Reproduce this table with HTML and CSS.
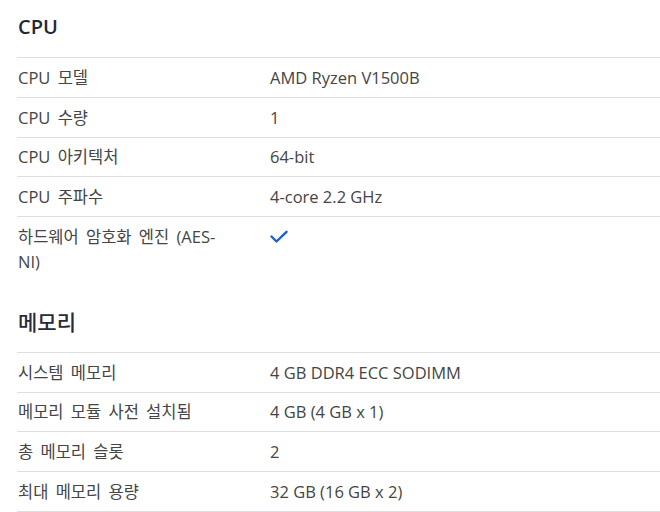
FILE: index.html
```html
<!DOCTYPE html>
<html lang="ko">
<head>
<meta charset="utf-8">
<link rel="stylesheet" href="styles.css">
</head>
<body>
<div class="specs">
  <section class="group">
    <h2 class="group-title">CPU</h2>
    <div class="table">
      <div class="row"><div class="label">CPU 모델</div><div class="value">AMD Ryzen V1500B</div></div>
      <div class="row"><div class="label">CPU 수량</div><div class="value">1</div></div>
      <div class="row"><div class="label">CPU 아키텍처</div><div class="value">64-bit</div></div>
      <div class="row"><div class="label">CPU 주파수</div><div class="value">4-core 2.2 GHz</div></div>
      <div class="row"><div class="label">하드웨어 암호화 엔진 (AES-NI)</div><div class="value"><svg class="check" width="18" height="14" viewBox="0 0 18 14"><path d="M1.5 6.5 L6.5 11.5 L16.5 1.8" fill="none" stroke="#1a5fd2" stroke-width="2.4" stroke-linecap="round" stroke-linejoin="round"/></svg></div></div>
    </div>
  </section>
  <section class="group">
    <h2 class="group-title group-title-ko">메모리</h2>
    <div class="table table-closed">
      <div class="row"><div class="label">시스템 메모리</div><div class="value">4 GB DDR4 ECC SODIMM</div></div>
      <div class="row"><div class="label">메모리 모듈 사전 설치됨</div><div class="value">4 GB (4 GB x 1)</div></div>
      <div class="row"><div class="label">총 메모리 슬롯</div><div class="value">2</div></div>
      <div class="row"><div class="label">최대 메모리 용량</div><div class="value">32 GB (16 GB x 2)</div></div>
    </div>
  </section>
</div>
</body>
</html>
```

FILE: styles.css
```css
html, body {
  margin: 0;
  padding: 0;
  background: #fff;
}
body {
  font-family: "Open Sans", "Noto Sans CJK KR", sans-serif;
  color: #454545;
  font-size: 16.5px;
}
.specs {
  padding-left: 17px;
}
.group + .group {
  margin-top: 14px;
}
.group-title {
  margin: 0;
  padding: 12px 0 15px 1px;
  font-size: 20px;
  line-height: 30px;
  font-weight: 600;
  color: #232838;
}
.group-title-ko {
  font-size: 21px;
  font-weight: 500;
  color: #2a2a3a;
}
.row {
  display: grid;
  grid-template-columns: 253px 1fr;
  border-top: 1px solid #dedede;
  padding: 6.875px 0;
  line-height: 25px;
}
.table-closed {
  border-bottom: 1px solid #dedede;
}
.label {
  padding-left: 1px;
  padding-right: 36px;
  word-spacing: 3px;
}
.value {
  display: flex;
  align-items: flex-start;
}
.check {
  margin-top: 6px;
  margin-left: 0;
}
```
